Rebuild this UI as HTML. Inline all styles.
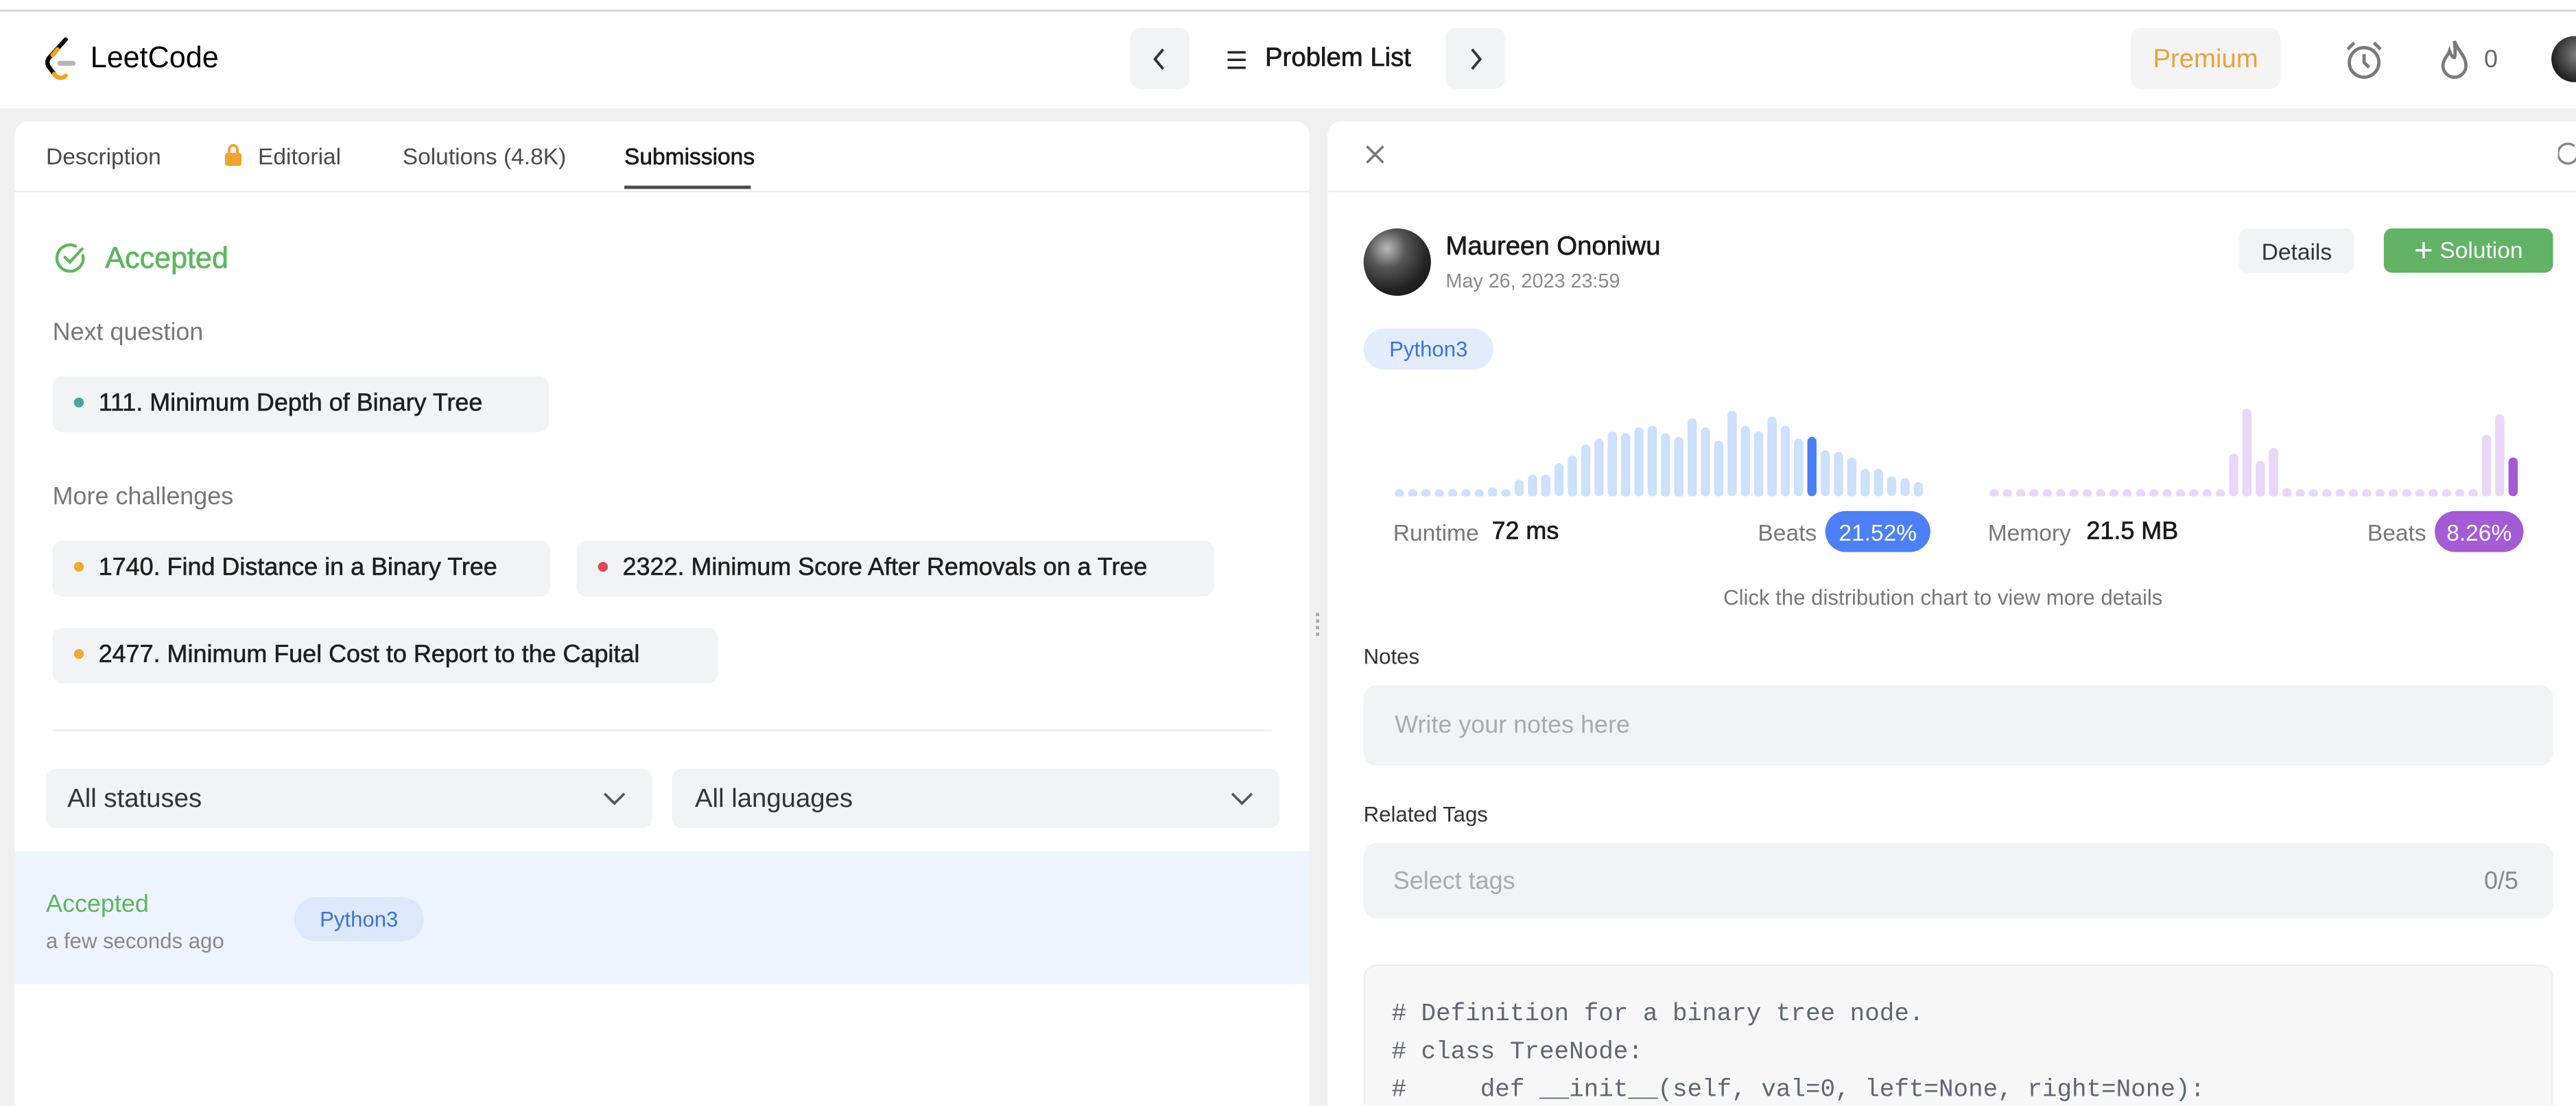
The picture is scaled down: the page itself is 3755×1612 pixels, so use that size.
<!DOCTYPE html>
<html><head><meta charset="utf-8"><style>
html,body{margin:0;padding:0;background:#fff;overflow:hidden}
body{width:3755px;height:1612px;position:relative}
#s{position:absolute;left:0;top:0;width:1568px;height:673px;transform:scale(2.3948);transform-origin:0 0;font-family:"Liberation Sans",sans-serif;background:#f0f0f0;overflow:hidden}
.a{position:absolute;white-space:nowrap}
.chip{position:absolute;background:#f2f3f4;border-radius:6px;font-size:15px;color:#1f1f1f;line-height:34px;height:34px;-webkit-text-stroke:0.25px #1f1f1f}
.dot{display:inline-block;width:6px;height:6px;border-radius:50%;margin:0 9px 2px 14px;vertical-align:middle}
</style></head><body><div id="s">
<div class="a" style="left:0;top:0;width:1568px;height:66px;background:#fff"></div>
<div class="a" style="left:0;top:6px;width:1568px;height:1px;background:#cfcfcf"></div>
<svg class="a" style="left:25px;top:22px" width="26" height="28" viewBox="0 0 26 28"><path d="M15 2 L5 13 C3.5 15 3.5 17 5 19 L8 23" stroke="#000" stroke-width="2.6" fill="none" stroke-linecap="round"/><path d="M8 23 C10 26 13 26 15 24" stroke="#ffa116" stroke-width="2.6" fill="none" stroke-linecap="round"/><path d="M10 8 L7 11.5" stroke="#ffa116" stroke-width="2.6" fill="none" stroke-linecap="round"/><rect x="10" y="15" width="11" height="3" rx="1.5" fill="#b3b3b3"/></svg>
<div class="a" style="left:55px;top:25px;font-size:18px;color:#000">LeetCode</div>
<div class="a" style="left:688px;top:17px;width:36px;height:37px;background:#f2f3f4;border-radius:6px"></div>
<svg class="a" style="left:700px;top:28px" width="12" height="16"><path d="M8 2 L3 8 L8 14" stroke="#333" stroke-width="1.6" fill="none"/></svg>
<div class="a" style="left:746px;top:28px;font-size:15px;color:#262626">☰</div>
<div class="a" style="left:770px;top:27px;font-size:16px;color:#1a1a1a;-webkit-text-stroke:0.3px #1a1a1a">Problem List</div>
<div class="a" style="left:880px;top:17px;width:36px;height:37px;background:#f2f3f4;border-radius:6px"></div>
<svg class="a" style="left:892px;top:28px" width="12" height="16"><path d="M4 2 L9 8 L4 14" stroke="#333" stroke-width="1.6" fill="none"/></svg>
<div class="a" style="left:1297px;top:17px;width:91px;height:37px;background:#f4f4f5;border-radius:6px;color:#e9a23b;font-size:16px;text-align:center;line-height:39px">Premium</div>
<svg class="a" style="left:1426px;top:24px" width="26" height="26" viewBox="0 0 26 26"><circle cx="13" cy="14" r="9" stroke="#7a7a7a" stroke-width="2" fill="none"/><path d="M13 9 V14 L16 17" stroke="#7a7a7a" stroke-width="2" fill="none"/><path d="M3 6 L7 2 M23 6 L19 2" stroke="#7a7a7a" stroke-width="2"/></svg>
<svg class="a" style="left:1484px;top:23px" width="20" height="26" viewBox="0 0 20 26"><path d="M10 2 C12 8 17 11 17 17 A7 7 0 0 1 3 17 C3 13 6 11 7 8 C8 11 9 12 10 12 C11 9 10 5 10 2Z" stroke="#7a7a7a" stroke-width="2" fill="none"/></svg>
<div class="a" style="left:1512px;top:28px;font-size:15px;color:#666">0</div>
<div class="a" style="left:1553px;top:22px;width:28px;height:28px;border-radius:50%;background:radial-gradient(circle at 60% 40%,#888,#222 70%)"></div>

<!-- left panel -->
<div class="a" style="left:9px;top:74px;width:788px;height:599px;background:#fff;border-radius:8px 8px 0 0"></div>
<div class="a" style="left:9px;top:116px;width:788px;height:1px;background:#eee"></div>
<div class="a" style="left:28px;top:87px;font-size:14px;color:#4a4a4a">Description</div>
<svg class="a" style="left:136px;top:87px" width="12" height="14"><rect x="1" y="6" width="10" height="8" rx="1.5" fill="#f0a32f"/><path d="M3.5 6 V4 A2.5 2.5 0 0 1 8.5 4 V6" stroke="#f0a32f" stroke-width="1.6" fill="none"/></svg>
<div class="a" style="left:157px;top:87px;font-size:14px;color:#4a4a4a">Editorial</div>
<div class="a" style="left:245px;top:87px;font-size:14px;color:#4a4a4a">Solutions (4.8K)</div>
<div class="a" style="left:380px;top:87px;font-size:14px;color:#1a1a1a;-webkit-text-stroke:0.3px #1a1a1a">Submissions</div>
<div class="a" style="left:380px;top:113px;width:77px;height:2px;background:#4a4a4a"></div>
<svg class="a" style="left:33px;top:147px" width="20" height="20" viewBox="0 0 20 20"><path d="M17.5 8.5 A8 8 0 1 1 13 2.8" stroke="#5cb85c" stroke-width="1.8" fill="none" stroke-linecap="round"/><path d="M6.5 9.5 L9.5 12.5 L17 4.5" stroke="#5cb85c" stroke-width="1.8" fill="none" stroke-linecap="round"/></svg>
<div class="a" style="left:64px;top:147px;font-size:18px;color:#5cb85c;-webkit-text-stroke:0.3px #5cb85c">Accepted</div>
<div class="a" style="left:32px;top:194px;font-size:15px;color:#777">Next question</div>
<div class="chip" style="left:32px;top:229px;width:302px"><span class="dot" style="background:#4aa695;margin-left:13px"></span>111. Minimum Depth of Binary Tree</div>
<div class="a" style="left:32px;top:294px;font-size:15px;color:#777">More challenges</div>
<div class="chip" style="left:32px;top:329px;width:303px"><span class="dot" style="background:#f0ac30;margin-left:13px"></span>1740. Find Distance in a Binary Tree</div>
<div class="chip" style="left:351px;top:329px;width:388px"><span class="dot" style="background:#e04855;margin-left:13px"></span>2322. Minimum Score After Removals on a Tree</div>
<div class="chip" style="left:32px;top:382px;width:405px"><span class="dot" style="background:#f0ac30;margin-left:13px"></span>2477. Minimum Fuel Cost to Report to the Capital</div>
<div class="a" style="left:32px;top:444px;width:742px;height:1px;background:#eee"></div>
<div class="a" style="left:28px;top:468px;width:369px;height:36px;background:#f2f3f4;border-radius:6px"></div>
<div class="a" style="left:41px;top:478px;font-size:16px;color:#333">All statuses</div>
<svg class="a" style="left:366px;top:480px" width="16" height="12"><path d="M2 3 L8 9 L14 3" stroke="#555" stroke-width="1.5" fill="none"/></svg>
<div class="a" style="left:409px;top:468px;width:370px;height:36px;background:#f2f3f4;border-radius:6px"></div>
<div class="a" style="left:423px;top:478px;font-size:16px;color:#333">All languages</div>
<svg class="a" style="left:748px;top:480px" width="16" height="12"><path d="M2 3 L8 9 L14 3" stroke="#555" stroke-width="1.5" fill="none"/></svg>
<div class="a" style="left:9px;top:518px;width:788px;height:81px;background:#eef4fd"></div>
<div class="a" style="left:28px;top:542px;font-size:15px;color:#5cb85c">Accepted</div>
<div class="a" style="left:28px;top:565px;font-size:13px;color:#888">a few seconds ago</div>
<div class="a" style="left:179px;top:546px;width:79px;height:27px;border-radius:14px;background:#dde8fb;color:#3b73e0;font-size:13px;text-align:center;line-height:27px">Python3</div>

<div class="a" style="left:801px;top:373px;width:2px;height:2px;background:#aaa;box-shadow:0 4px #aaa,0 8px #aaa,0 12px #aaa"></div>

<!-- right panel -->
<div class="a" style="left:808px;top:74px;width:780px;height:599px;background:#fff;border-radius:8px 0 0 0"></div>
<div class="a" style="left:808px;top:116px;width:760px;height:1px;background:#f2f2f2"></div>
<svg class="a" style="left:830px;top:87px" width="14" height="14"><path d="M2 2 L12 12 M12 2 L2 12" stroke="#777" stroke-width="1.5"/></svg>
<svg class="a" style="left:1557px;top:86px" width="14" height="16"><path d="M10 3 A6 6 0 1 0 12 8" stroke="#888" stroke-width="1.5" fill="none"/></svg>
<div class="a" style="left:830px;top:139px;width:41px;height:41px;border-radius:50%;background:radial-gradient(circle at 35% 30%,#bbb 0,#555 30%,#222 65%,#111)"></div>
<div class="a" style="left:880px;top:142px;font-size:16px;color:#1a1a1a;-webkit-text-stroke:0.3px #1a1a1a">Maureen Ononiwu</div>
<div class="a" style="left:880px;top:164px;font-size:12px;color:#8a8a8a">May 26, 2023 23:59</div>
<div class="a" style="left:1363px;top:139px;width:70px;height:27px;background:#f2f3f4;border-radius:5px;font-size:14px;color:#333;text-align:center;line-height:29px">Details</div>
<div class="a" style="left:1451px;top:139px;width:103px;height:27px;background:#62b366;border-radius:5px;font-size:14px;color:#fff;text-align:center;line-height:27px"><span style="font-size:20px;vertical-align:-2px;margin-right:4px">+</span>Solution</div>
<div class="a" style="left:830px;top:200px;width:79px;height:25px;border-radius:13px;background:#e3ecfb;color:#3b73e0;font-size:13px;text-align:center;line-height:25px">Python3</div>

<svg class="a" style="left:848px;top:240px" width="326" height="62" viewBox="0 0 326 62">
<g fill="#cde0fc">
<rect x="1" y="57.8" width="5.6" height="5" rx="2.8"/><rect x="9.1" y="57.8" width="5.6" height="5" rx="2.8"/><rect x="17.2" y="57.8" width="5.6" height="5" rx="2.8"/><rect x="25.3" y="57.8" width="5.6" height="5" rx="2.8"/><rect x="33.4" y="57.8" width="5.6" height="5" rx="2.8"/><rect x="41.5" y="57.8" width="5.6" height="5" rx="2.8"/><rect x="49.6" y="57.8" width="5.6" height="5" rx="2.8"/><rect x="57.7" y="56.7" width="5.6" height="6" rx="2.8"/><rect x="65.8" y="57.8" width="5.6" height="5" rx="2.8"/><rect x="73.9" y="52" width="5.6" height="10" rx="2.8"/><rect x="82" y="48.8" width="5.6" height="14" rx="2.8"/><rect x="90.1" y="48.8" width="5.6" height="14" rx="2.8"/><rect x="98.2" y="41.9" width="5.6" height="20" rx="2.8"/><rect x="106.3" y="37.3" width="5.6" height="25" rx="2.8"/><rect x="114.4" y="30.5" width="5.6" height="32" rx="2.8"/><rect x="122.5" y="27" width="5.6" height="35" rx="2.8"/><rect x="130.6" y="22.6" width="5.6" height="40" rx="2.8"/><rect x="138.7" y="23.6" width="5.6" height="39" rx="2.8"/><rect x="146.8" y="20.1" width="5.6" height="42" rx="2.8"/><rect x="154.9" y="19.1" width="5.6" height="43" rx="2.8"/><rect x="163" y="23.6" width="5.6" height="39" rx="2.8"/><rect x="171.1" y="25.9" width="5.6" height="37" rx="2.8"/><rect x="179.2" y="14.6" width="5.6" height="48" rx="2.8"/><rect x="187.3" y="20.1" width="5.6" height="42" rx="2.8"/><rect x="195.4" y="28.2" width="5.6" height="34" rx="2.8"/><rect x="203.5" y="10" width="5.6" height="52" rx="2.8"/><rect x="211.6" y="19.1" width="5.6" height="43" rx="2.8"/><rect x="219.7" y="22.5" width="5.6" height="40" rx="2.8"/><rect x="227.8" y="13.5" width="5.6" height="49" rx="2.8"/><rect x="235.9" y="19.1" width="5.6" height="43" rx="2.8"/><rect x="244" y="27" width="5.6" height="35" rx="2.8"/>
<rect x="260.2" y="34" width="5.6" height="28" rx="2.8"/><rect x="268.3" y="35.1" width="5.6" height="27" rx="2.8"/><rect x="276.4" y="38.4" width="5.6" height="24" rx="2.8"/><rect x="284.5" y="45.3" width="5.6" height="17" rx="2.8"/><rect x="292.6" y="45.3" width="5.6" height="17" rx="2.8"/><rect x="300.7" y="49.9" width="5.6" height="12" rx="2.8"/><rect x="308.8" y="51" width="5.6" height="11" rx="2.8"/><rect x="316.9" y="53.4" width="5.6" height="9" rx="2.8"/>
</g>
<rect x="252.1" y="25.9" width="5.6" height="36.1" rx="2.8" fill="#4a7ff5"/>
</svg>

<svg class="a" style="left:1210px;top:240px" width="326" height="62" viewBox="0 0 326 62">
<g fill="#e8d7f6">
<rect x="1" y="57.8" width="5.6" height="5" rx="2.8"/><rect x="9.1" y="57.8" width="5.6" height="5" rx="2.8"/><rect x="17.2" y="57.8" width="5.6" height="5" rx="2.8"/><rect x="25.3" y="57.8" width="5.6" height="5" rx="2.8"/><rect x="33.4" y="57.8" width="5.6" height="5" rx="2.8"/><rect x="41.5" y="57.8" width="5.6" height="5" rx="2.8"/><rect x="49.6" y="57.8" width="5.6" height="5" rx="2.8"/><rect x="57.7" y="57.8" width="5.6" height="5" rx="2.8"/><rect x="65.8" y="57.8" width="5.6" height="5" rx="2.8"/><rect x="73.9" y="57.8" width="5.6" height="5" rx="2.8"/><rect x="82" y="57.8" width="5.6" height="5" rx="2.8"/><rect x="90.1" y="57.8" width="5.6" height="5" rx="2.8"/><rect x="98.2" y="57.8" width="5.6" height="5" rx="2.8"/><rect x="106.3" y="57.8" width="5.6" height="5" rx="2.8"/><rect x="114.4" y="57.8" width="5.6" height="5" rx="2.8"/><rect x="122.5" y="57.8" width="5.6" height="5" rx="2.8"/><rect x="130.6" y="57.8" width="5.6" height="5" rx="2.8"/><rect x="138.7" y="57.8" width="5.6" height="5" rx="2.8"/>
<rect x="146.8" y="36.1" width="5.6" height="26" rx="2.8"/><rect x="154.9" y="8.6" width="5.6" height="54" rx="2.8"/><rect x="163" y="40.5" width="5.6" height="22" rx="2.8"/><rect x="171.1" y="32.6" width="5.6" height="30" rx="2.8"/><rect x="179.2" y="57" width="5.6" height="6" rx="2.8"/>
<rect x="187.3" y="57.8" width="5.6" height="5" rx="2.8"/><rect x="195.4" y="57.8" width="5.6" height="5" rx="2.8"/><rect x="203.5" y="57.8" width="5.6" height="5" rx="2.8"/><rect x="211.6" y="57.8" width="5.6" height="5" rx="2.8"/><rect x="219.7" y="57.8" width="5.6" height="5" rx="2.8"/><rect x="227.8" y="57.8" width="5.6" height="5" rx="2.8"/><rect x="235.9" y="57.8" width="5.6" height="5" rx="2.8"/><rect x="244" y="57.8" width="5.6" height="5" rx="2.8"/><rect x="252.1" y="57.8" width="5.6" height="5" rx="2.8"/><rect x="260.2" y="57.8" width="5.6" height="5" rx="2.8"/><rect x="268.3" y="57.8" width="5.6" height="5" rx="2.8"/><rect x="276.4" y="57.8" width="5.6" height="5" rx="2.8"/><rect x="284.5" y="57.8" width="5.6" height="5" rx="2.8"/><rect x="292.6" y="57.8" width="5.6" height="5" rx="2.8"/>
<rect x="300.7" y="24.6" width="5.6" height="38" rx="2.8"/><rect x="308.8" y="12.1" width="5.6" height="50" rx="2.8"/>
</g>
<rect x="316.9" y="38.4" width="5.6" height="23.6" rx="2.8" fill="#a15bd6"/>
</svg>

<div class="a" style="left:848px;top:316px;font-size:14px;color:#777">Runtime</div>
<div class="a" style="left:908px;top:315px;font-size:15px;color:#1a1a1a;-webkit-text-stroke:0.3px #1a1a1a">72 ms</div>
<div class="a" style="left:1070px;top:316px;font-size:14px;color:#777">Beats</div>
<div class="a" style="left:1111px;top:311px;width:64px;height:25px;border-radius:13px;background:#4d80f8;color:#fff;font-size:14px;text-align:center;line-height:26px">21.52%</div>
<div class="a" style="left:1210px;top:316px;font-size:14px;color:#777">Memory</div>
<div class="a" style="left:1270px;top:315px;font-size:15px;color:#1a1a1a;-webkit-text-stroke:0.3px #1a1a1a">21.5 MB</div>
<div class="a" style="left:1441px;top:316px;font-size:14px;color:#777">Beats</div>
<div class="a" style="left:1482px;top:311px;width:54px;height:25px;border-radius:13px;background:#a45bd6;color:#fff;font-size:14px;text-align:center;line-height:26px">8.26%</div>
<div class="a" style="left:1049px;top:356px;font-size:13px;color:#777">Click the distribution chart to view more details</div>
<div class="a" style="left:830px;top:392px;font-size:13px;color:#333">Notes</div>
<div class="a" style="left:830px;top:417px;width:724px;height:49px;background:#f2f3f4;border-radius:8px"></div>
<div class="a" style="left:849px;top:433px;font-size:15px;color:#aaa">Write your notes here</div>
<div class="a" style="left:830px;top:488px;font-size:13px;color:#333">Related Tags</div>
<div class="a" style="left:830px;top:513px;width:724px;height:46px;background:#f2f3f4;border-radius:8px"></div>
<div class="a" style="left:848px;top:528px;font-size:15px;color:#aaa">Select tags</div>
<div class="a" style="left:1512px;top:528px;font-size:15px;color:#888">0/5</div>
<div class="a" style="left:830px;top:587px;width:724px;height:86px;background:#f7f7f8;border-radius:8px 8px 0 0;box-shadow:inset 0 1px 0 #eee,inset 1px 0 0 #eee,inset -1px 0 0 #eee"></div>
<div class="a" style="left:847px;top:606px;font-family:'Liberation Mono',monospace;font-size:15px;line-height:23px;color:#5f6673;white-space:pre"># Definition for a binary tree node.
# class TreeNode:
#     def __init__(self, val=0, left=None, right=None):</div>
</div></body></html>
